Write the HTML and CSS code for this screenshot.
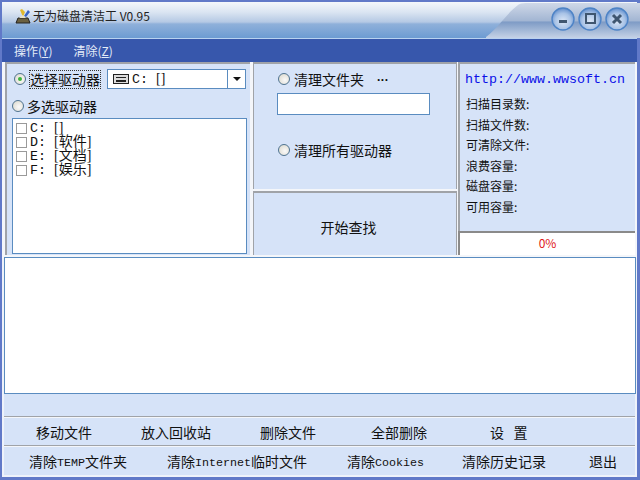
FILE: index.html
```html
<!DOCTYPE html>
<html lang="zh">
<head>
<meta charset="utf-8">
<title>无为磁盘清洁工</title>
<link rel="stylesheet" href="styles.css">
</head>
<body>
<div class="window">
  <header class="titlebar">
    <svg class="title-deco" width="200" height="38" viewBox="0 0 200 38">
      <defs>
        <linearGradient id="deco" x1="0" y1="0" x2="0" y2="1">
          <stop offset="0" stop-color="#cfd8e8"/>
          <stop offset="0.5" stop-color="#a3b6d3"/>
          <stop offset="0.55" stop-color="#7f9cc6"/>
          <stop offset="1" stop-color="#c5d2e6"/>
        </linearGradient>
        <radialGradient id="btn" cx="0.5" cy="0.6" r="0.6">
          <stop offset="0" stop-color="#dce7f6"/>
          <stop offset="0.6" stop-color="#a9c3e6"/>
          <stop offset="1" stop-color="#5f8ccc"/>
        </radialGradient>
      </defs>
      <path d="M46 37 C60 26 66 14 78 5 Q80 3 86 3 L200 3 L200 38 L46 38 Z" fill="url(#deco)"/>
      <g stroke="#4d83c6" stroke-width="1.4" fill="url(#btn)">
        <circle cx="123" cy="19" r="11"/>
        <circle cx="150" cy="19" r="11"/>
        <circle cx="177" cy="19" r="11"/>
      </g>
      <rect x="119" y="20" width="8" height="3" fill="#3f5670"/>
      <rect x="146" y="14" width="9" height="9" fill="none" stroke="#3f5670" stroke-width="2"/>
      <path d="M173 15 L181 23 M181 15 L173 23" stroke="#3f5670" stroke-width="3"/>
    </svg>
    <svg class="app-icon" width="16" height="16" viewBox="0 0 16 16">
      <path d="M1 15 L3 10 L13 10 L15 15 Z" fill="#6b6040" stroke="#222"/>
      <path d="M8 9 L5 2 L7 1 L10 4 Z" fill="#e2b92c"/>
      <path d="M9 8 L13 2 L15 4 L11 9 Z" fill="#3864c8"/>
      <path d="M4 10 L8 7 L11 10 Z" fill="#e8e2c8"/>
    </svg>
    <span class="app-title">无为磁盘清洁工 V0.95</span>
  </header>
  <nav class="menubar">
    <span>操作(<u>Y</u>)</span>
    <span>清除(<u>Z</u>)</span>
  </nav>
  <main class="panels">
    <section class="panel drives">
      <div class="drive-select">
        <label class="radio focused"><i class="dot on"></i><span class="focus-text">选择驱动器</span></label>
        <div class="combo">
          <svg width="16" height="10" viewBox="0 0 16 10"><rect x="0.5" y="0.5" width="15" height="9" fill="#ddd" stroke="#222"/><rect x="3" y="3" width="10" height="1" fill="#222"/><rect x="3" y="6" width="10" height="2" fill="#222"/></svg>
          <span class="mono combo-text">C: <span class="br">[]</span></span>
          <span class="combo-arrow"><b></b></span>
        </div>
      </div>
      <label class="radio multi"><i class="dot"></i><span>多选驱动器</span></label>
      <ul class="drive-list">
        <li><i class="check"></i><span class="mono">C: <span class="br">[]</span></span></li>
        <li><i class="check"></i><span class="mono">D: <span class="br">[软件]</span></span></li>
        <li><i class="check"></i><span class="mono">E: <span class="br">[文档]</span></span></li>
        <li><i class="check"></i><span class="mono">F: <span class="br">[娱乐]</span></span></li>
      </ul>
    </section>
    <div class="middle">
      <section class="panel folder">
        <div class="folder-row">
          <label class="radio"><i class="dot"></i><span>清理文件夹</span></label>
          <span class="dots">...</span>
        </div>
        <div class="field"></div>
        <label class="radio all"><i class="dot"></i><span>清理所有驱动器</span></label>
      </section>
      <button class="panel start">开始查找</button>
    </div>
    <div class="right">
      <section class="panel info">
        <div class="url">http://www.wwsoft.cn</div>
        <ul class="stats">
          <li>扫描目录数:</li>
          <li>扫描文件数:</li>
          <li>可清除文件:</li>
          <li>浪费容量:</li>
          <li>磁盘容量:</li>
          <li>可用容量:</li>
        </ul>
      </section>
      <div class="progress">0%</div>
    </div>
  </main>
  <div class="log"></div>
  <div class="status"></div>
  <div class="row row-a">
    <span>移动文件</span>
    <span>放入回收站</span>
    <span>删除文件</span>
    <span>全部删除</span>
    <span>设&nbsp;&nbsp;&nbsp;置</span>
  </div>
  <div class="row row-b">
    <span>清除<em>TEMP</em>文件夹</span>
    <span>清除<em>Internet</em>临时文件</span>
    <span>清除<em>Cookies</em></span>
    <span class="history">清除历史记录</span>
    <span class="quit">退出</span>
  </div>
</div>
</body>
</html>
```
FILE: styles.css
```css
* { box-sizing: border-box; }
html, body { margin: 0; padding: 0; }
body {
  width: 640px;
  height: 480px;
  overflow: hidden;
  font-family: "Noto Sans CJK SC", "Liberation Sans", sans-serif;
  font-size: 14px;
  color: #111;
}
ul { list-style: none; margin: 0; padding: 0; }
.window {
  width: 640px;
  height: 480px;
  display: flex;
  flex-direction: column;
  background: #eef2fa;
  border: 2px solid #6179c8;
  border-width: 2px 3px 3px 2px;
  position: relative;
}
.titlebar {
  height: 37px;
  flex: none;
  display: flex;
  align-items: flex-start;
  padding: 5px 0 0 13px;
  gap: 2px;
  background: linear-gradient(#f4f7fb 0, #dbe5f2 10px, #b5c9e4 20px, #8fb0da 22px, #6d9bd2 36px);
  border-bottom: 1px solid #b9d2f0;
  position: relative;
}
.title-deco { position: absolute; right: -3px; top: -2px; }
.app-icon { flex: none; margin-top: 1px; }
.app-title { font-size: 12px; line-height: 17px; color: #222; }
.menubar {
  height: 23px;
  flex: none;
  background: #3757ac;
  color: #e4ecf8;
  display: flex;
  gap: 21px;
  padding: 0 0 0 12px;
  font-size: 12px;
  line-height: 24px;
}
.panels {
  height: 196px;
  flex: none;
  display: flex;
  padding: 0 2px 3px 3px;
  background: #f4f6fa;
}
.panel { background: #d6e3f8; }
.drives {
  width: 245px;
  flex: none;
  border-top: 2px solid #a0a3a8;
  border-left: 2px solid #a0a3a8;
  padding: 5px 0 0 5px;
}
.radio {
  display: flex;
  align-items: center;
  gap: 4px;
  line-height: 20px;
  font-size: 14px;
}
.dot {
  width: 12px;
  height: 12px;
  border-radius: 50%;
  border: 1px solid #4f7390;
  background: radial-gradient(circle at 60% 60%, #fafafa, #d8d5c8);
  display: block;
  position: relative;
  flex: none;
}
.dot.on::after {
  content: "";
  position: absolute;
  left: 3px;
  top: 3px;
  width: 4px;
  height: 4px;
  border-radius: 50%;
  background: #3cb43c;
}
.drive-select { display: flex; align-items: center; gap: 5px; padding-left: 2px; }
.focus-text { outline: 1px dotted #333; line-height: 17px; }
.combo {
  width: 139px;
  height: 20px;
  margin-left: 2px;
  background: #fff;
  border: 1px solid #5a8cc0;
  display: flex;
  align-items: center;
  padding-left: 5px;
  gap: 3px;
}
.mono { font-family: "Liberation Mono", "Noto Sans CJK SC", monospace; font-size: 13.33px; }
.br { font-family: "Liberation Serif", "Noto Sans CJK SC", serif; font-size: 14px; }
.combo-text { flex: 1; line-height: 18px; }
.combo-arrow {
  width: 18px;
  height: 18px;
  border-left: 1px solid #5a8cc0;
  display: flex;
  align-items: center;
  justify-content: center;
}
.combo-arrow b {
  border: 4px solid transparent;
  border-top: 4px solid #111;
  border-bottom: 0;
}
.multi { margin-top: 7px; gap: 3px; }
.drive-list {
  width: 235px;
  height: 136px;
  margin-top: 2px;
  background: #fff;
  border: 1px solid #5a8cc0;
  padding: 2px 0 0 3px;
}
.drive-list li {
  display: flex;
  align-items: center;
  gap: 3px;
  height: 14px;
  line-height: 14px;
  white-space: nowrap;
}
.check {
  width: 11px;
  height: 11px;
  border: 1px solid #9a9a9a;
  background: #fff;
  display: block;
  flex: none;
}
.middle {
  width: 204px;
  flex: none;
  margin-left: 3px;
  display: flex;
  flex-direction: column;
}
.folder {
  height: 127px;
  flex: none;
  border-top: 2px solid #a0a3a8;
  border-left: 1px solid #a0a3a8;
  border-right: 1px solid #a0a3a8;
  padding: 5px 0 0 23px;
}
.folder-row { display: flex; align-items: center; padding-left: 1px; height: 20px; }
.dots { margin-left: 13px; font-family: "Liberation Sans", sans-serif; font-weight: 700; font-size: 12px; line-height: 12px; margin-top: -4px; letter-spacing: 0.5px; }
.field {
  width: 153px;
  height: 22px;
  margin-top: 4px;
  background: #fff;
  border: 1px solid #5a8cc0;
}
.all { margin-top: 25px; padding-left: 1px; }
.start {
  flex: 1;
  margin-top: 2px;
  border: 0;
  border-top: 2px solid #a0a3a8;
  border-left: 1px solid #a0a3a8;
  border-right: 1px solid #a0a3a8;
  font: 14px "Noto Sans CJK SC", sans-serif;
  color: #111;
  padding: 6px 13px 0 0;
}
.right {
  flex: 1;
  margin-left: 1px;
  display: flex;
  flex-direction: column;
}
.info {
  height: 169px;
  flex: none;
  border-top: 2px solid #a0a3a8;
  border-left: 2px solid #a0a3a8;
  padding: 7px 0 0 5px;
}
.url {
  font-family: "Liberation Mono", monospace;
  font-size: 13.33px;
  line-height: 18px;
  color: #0a10e8;
}
.stats { margin-top: 5px; padding-left: 1px; font-size: 12px; }
.stats li { height: 20.5px; line-height: 20px; }
.progress {
  flex: 1;
  background: #fff;
  border-top: 2px solid #8a8a8a;
  border-left: 2px solid #8a8a8a;
  color: #e01818;
  font-size: 12px;
  text-align: center;
  line-height: 19px;
}
.log {
  height: 137px;
  flex: none;
  margin: -1px 1px 0 2px;
  background: #fff;
  border: 1px solid #5a8cc0;
}
.status {
  height: 23px;
  flex: none;
  background: #d6e3f8;
  border-bottom: 1px solid #a0a3a8;
  margin: 0 2px;
}
.row {
  flex: none;
  margin: 0 2px;
  display: flex;
  align-items: center;
  white-space: nowrap;
  background: #d6e3f8;
}
.row-a {
  height: 29px;
  padding-left: 32px;
  gap: 49px;
  border-top: 1px solid #f4f6fa;
  border-bottom: 1px solid #a0a3a8;
}
.row-b {
  height: 29px;
  padding-left: 25px;
  gap: 40px;
  border-top: 1px solid #f4f6fa;
}
.row-a span:nth-child(4) { margin-left: 6px; }
.row-a span:nth-child(5) { margin-left: 14px; }
.history { margin-left: -2px; }
.quit { margin-left: 3px; }
em { font-style: normal; font-family: "Liberation Mono", monospace; font-size: 11.67px; vertical-align: 1px; }
```
